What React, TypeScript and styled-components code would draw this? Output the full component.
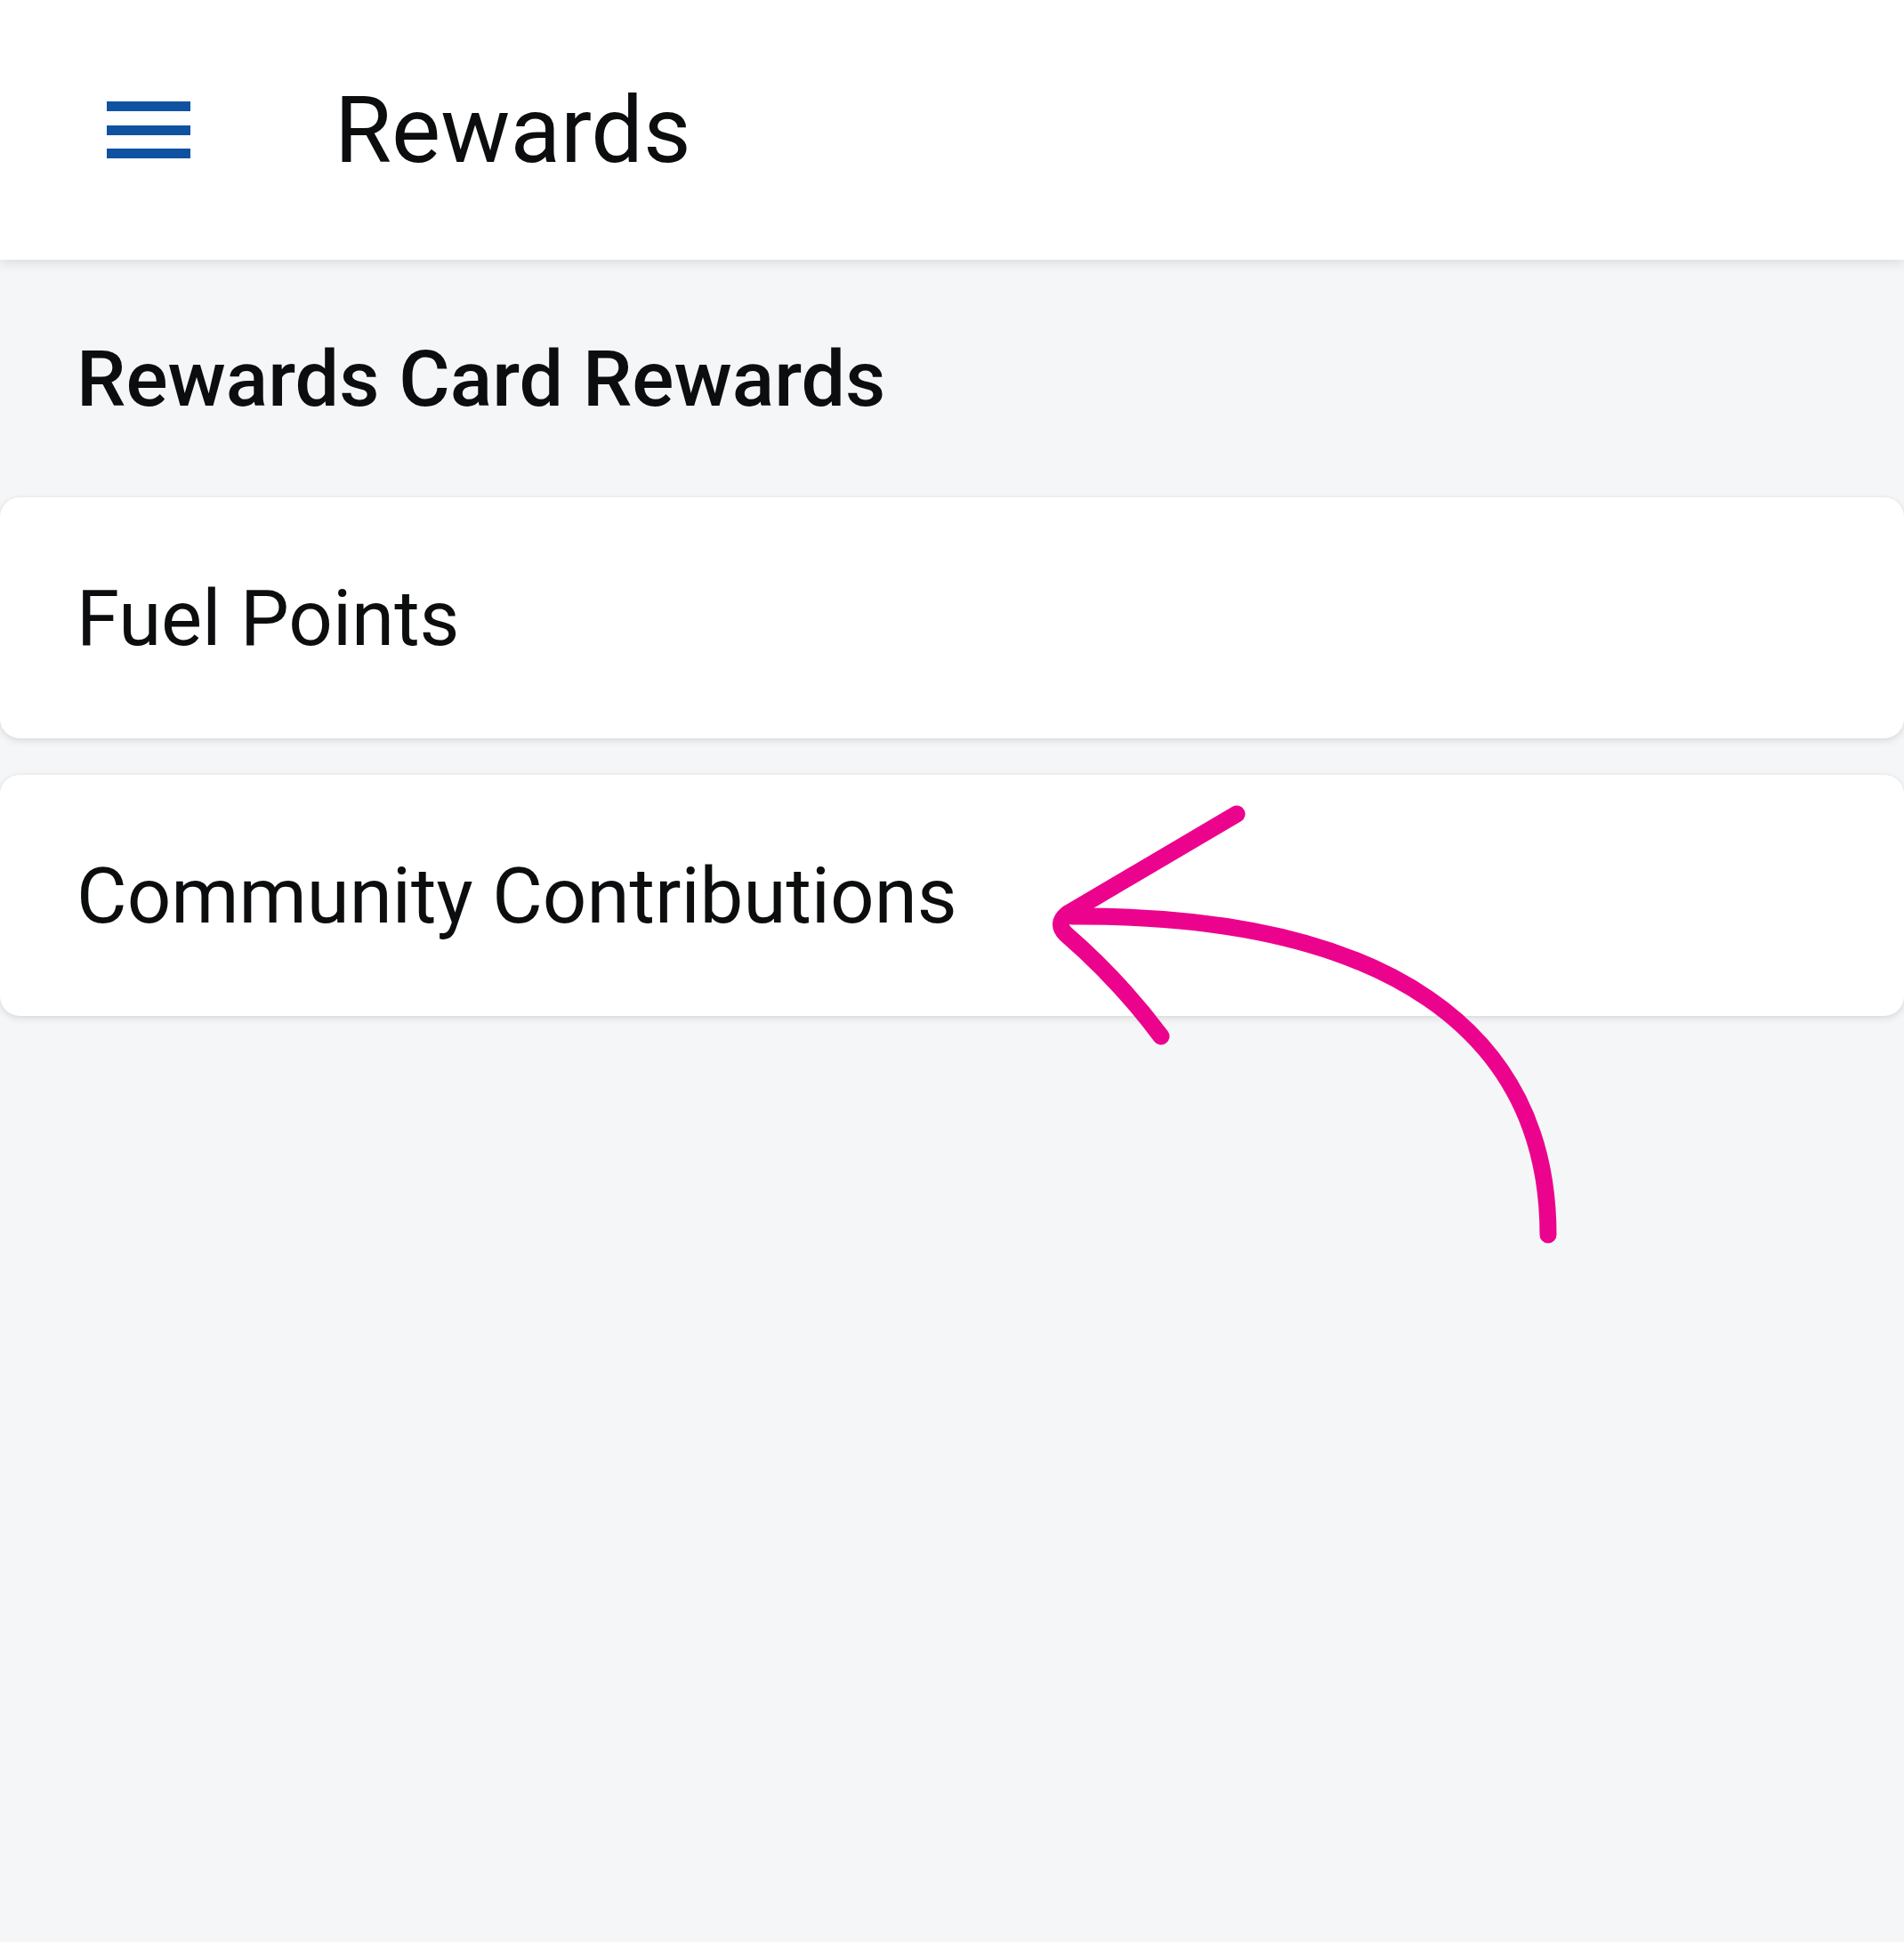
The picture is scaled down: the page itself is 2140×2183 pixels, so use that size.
import React from 'react'
import styled, { createGlobalStyle } from 'styled-components'

const GlobalStyle = createGlobalStyle`
  html, body {
    margin: 0;
    padding: 0;
    background: #f4f6f8;
  }
  * {
    box-sizing: border-box;
  }
`

const Screen = styled.div`
  position: relative;
  width: 2140px;
  min-height: 2183px;
  background: #f4f6f8;
  font-family: Roboto, 'Noto Sans', 'Liberation Sans', sans-serif;
  color: #0b0d0e;
  overflow: hidden;
`

const TopBar = styled.header`
  position: relative;
  z-index: 2;
  height: 292px;
  background: #ffffff;
  display: flex;
  align-items: center;
  padding-left: 120px;
  gap: 162px;
  box-shadow: 0 4px 12px rgba(0, 0, 0, 0.1);
`

const MenuButton = styled.button`
  width: 94px;
  height: 64px;
  padding: 0;
  border: none;
  background: transparent;
  display: flex;
  flex-direction: column;
  justify-content: space-between;
  cursor: pointer;
`

const MenuBar = styled.span`
  display: block;
  width: 94px;
  height: 11px;
  background: #1052a2;
`

const TopTitle = styled.h1`
  margin: 0;
  font-size: 104px;
  font-weight: 400;
  line-height: normal;
`

const Content = styled.main`
  display: flex;
  flex-direction: column;
  padding-top: 82px;
`

const SectionTitle = styled.h2`
  margin: 0 0 82px 86px;
  font-size: 88px;
  font-weight: 500;
  line-height: normal;
`

const CardList = styled.div`
  display: flex;
  flex-direction: column;
  gap: 41px;
`

const Card = styled.div`
  height: 271px;
  background: #ffffff;
  border-radius: 22px;
  display: flex;
  align-items: center;
  padding-left: 86px;
  box-shadow: 0 3px 8px rgba(0, 0, 0, 0.1), 0 0 4px rgba(0, 0, 0, 0.05);
`

const CardLabel = styled.span`
  font-size: 87px;
  font-weight: 400;
  line-height: normal;
`

const Annotation = styled.svg`
  position: absolute;
  left: 0;
  top: 0;
  width: 2140px;
  height: 2183px;
  pointer-events: none;
  z-index: 3;
`

const items = ['Fuel Points', 'Community Contributions']

export default function App() {
  return (
    <Screen>
      <GlobalStyle />
      <TopBar>
        <MenuButton aria-label="Menu">
          <MenuBar />
          <MenuBar />
          <MenuBar />
        </MenuButton>
        <TopTitle>Rewards</TopTitle>
      </TopBar>
      <Content>
        <SectionTitle>Rewards Card Rewards</SectionTitle>
        <CardList>
          {items.map((label) => (
            <Card key={label}>
              <CardLabel>{label}</CardLabel>
            </Card>
          ))}
        </CardList>
      </Content>
      {/* hand-drawn pointer on top of the list */}
      <Annotation viewBox="0 0 2140 2183">
        <g fill="none" stroke="#ec038d" strokeWidth={19} strokeLinecap="round" strokeLinejoin="round">
          <path d="M1390 915 L1200 1027 Q1186 1038 1198 1050 Q1258 1102 1305 1165" />
          <path d="M1205 1030 C1560 1028 1740 1160 1740 1388" />
        </g>
      </Annotation>
    </Screen>
  )
}
